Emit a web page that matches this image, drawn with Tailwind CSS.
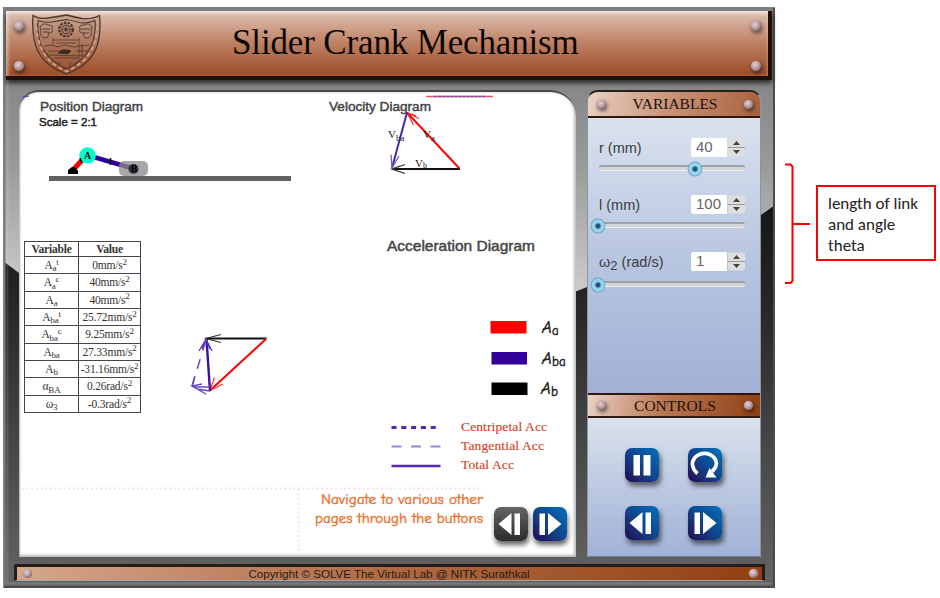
<!DOCTYPE html>
<html lang="en">
<head>
<meta charset="utf-8">
<title>Slider Crank Mechanism</title>
<script src="https://cdn.jsdelivr.net/npm/@tailwindcss/browser@4"></script>
</head>
<body class="w-[940px] h-[598px] overflow-hidden bg-white flex items-start font-['Liberation_Sans',sans-serif]">
<svg class="absolute w-0 h-0" aria-hidden="true">
  <defs>
    <radialGradient id="rivetFill" cx="40%" cy="35%" r="65%"><stop offset="0" stop-color="#e3d0d2"/><stop offset=".6" stop-color="#b99da0"/><stop offset="1" stop-color="#80686b"/></radialGradient>
    <radialGradient id="knobFill" cx="50%" cy="50%" r="50%"><stop offset="0" stop-color="#1d4a66"/><stop offset=".28" stop-color="#285a78"/><stop offset=".42" stop-color="#8cc8e4"/><stop offset=".75" stop-color="#a5d8ee"/><stop offset="1" stop-color="#5a9cbd"/></radialGradient>
    <symbol id="rivet" viewBox="0 0 12 12"><circle cx="6" cy="6" r="5.2" fill="url(#rivetFill)"/></symbol>
    <symbol id="knob" viewBox="0 0 16 16"><circle cx="8" cy="8" r="7.4" fill="url(#knobFill)"/></symbol>
    <symbol id="prev" viewBox="0 0 34 34"><path d="M4.500 17 17.500 6v22zM20.500 6.500h5.500v21.500h-5.500z" fill="#fff"/></symbol>
    <symbol id="next" viewBox="0 0 34 34"><path d="M6.500 6.500h5.500v21.500h-5.500zM15 6v22l13.500-11z" fill="#fff"/></symbol>
  </defs>
</svg>

<main class="relative ml-[3px] mt-[7px] w-[772px] h-[581px] shrink-0 flex flex-col">
  <svg class="absolute inset-0 -z-10" width="772" height="581" viewBox="3 7 772 581">
    <defs>
      <linearGradient id="metal" x1="0" y1="80" x2="0" y2="290" gradientUnits="userSpaceOnUse"><stop offset="0" stop-color="#868686"/><stop offset=".4" stop-color="#999"/><stop offset="1" stop-color="#cbcbcb"/></linearGradient>
      <linearGradient id="dark" x1="0" y1="210" x2="0" y2="580" gradientUnits="userSpaceOnUse"><stop offset="0" stop-color="#171717"/><stop offset=".25" stop-color="#262626"/><stop offset=".65" stop-color="#484848"/><stop offset="1" stop-color="#636363"/></linearGradient>
    </defs>
    <rect x="3" y="7" width="772" height="581" fill="url(#metal)"/>
    <path d="M3 261 19 273 300 340 577 291 587 287 761 215 775 205V588H3z" fill="url(#dark)"/>
    <path d="M4 588V8H774" fill="none" stroke="#7c7f7f" stroke-width="3"/>
    <path d="M774 8V587H4" fill="none" stroke="#4c4c4c" stroke-width="2"/>
    <path d="M7.500 80V584" stroke="#fff" stroke-opacity=".13" stroke-width="2"/>
    <path d="M7 583.500H771" stroke="#fff" stroke-opacity=".15" stroke-width="2"/>
  </svg>

  <header class="relative ml-[3px] mt-[4px] w-[766px] h-[69px] shrink-0 border-r-[4px] border-b-[4px] border-[#210e05] bg-linear-to-b from-[#dec2b3] via-[#bd8063] to-[#9b4a22] shadow-[0_3px_5px_rgba(0,0,0,.7),inset_0_3px_3px_rgba(255,255,255,.45),inset_3px_0_3px_rgba(255,255,255,.3)] flex items-stretch">
    <div class="w-[26px] pt-[9px] pb-[4px] pl-[7px] flex flex-col justify-between">
      <svg class="size-[12px] drop-shadow-[1px_2px_2px_rgba(0,0,0,.6)]"><use href="#rivet"/></svg>
      <svg class="size-[12px] drop-shadow-[1px_2px_2px_rgba(0,0,0,.6)]"><use href="#rivet"/></svg>
    </div>
    <svg class="w-[70px] h-[62px] mt-[3px]" viewBox="32 14 70 62" fill="none" stroke="#50382d">
      <path d="M33 15.500Q40 20 51 17.500Q59 16.500 66.500 15Q74 17 82 18.500Q92 19.500 99.500 15.500Q101 28 98.500 41Q96 52 88 61Q78 70 66.500 74Q54 70 45 61Q36 52 34 39Q32 27 33 15.500Z" stroke-width="1.300" fill="#6b4630" fill-opacity=".18"/>
      <path d="M38 20.500Q44 23 51 22Q59 21 66.500 19.500Q74 21 82 23Q90 23 95 20.500Q96 30 93 41Q90 50 83 58Q75 65 66.500 69Q58 65 50 58Q42 50 39.500 40Q37 30 38 20.500Z" stroke-width="1.100"/>
      <path d="M35.500 19Q37 48 50 61Q57 67 66.500 71.500Q77 67 85 59Q98 45 97.500 19" stroke="#d3a78f" stroke-width="1.800" stroke-dasharray="4 3"/>
      <circle cx="66" cy="29.500" r="6.800" stroke-width="2.400" stroke-dasharray="2.500 1.200"/><circle cx="66" cy="29.500" r="4.200"/><circle cx="66" cy="29.500" r="1.300"/><path d="M61 29.500h10M66 24.500v10M62.500 26l7 7M69.500 26l-7 7" stroke-width=".6"/>
      <path d="M40 27q3-5 8-2q6 0 4 4q2 4-4 4q2 5-4 5q-5-3-3-6zM92 27q-3-5-8-2q-6 0-4 4q-2 4 4 4q-2 5 4 5q5-3 3-6zM42 29h8M43 32h6M81 29h9M83 33h6" stroke-width=".9"/>
      <path d="M53 38v6M79 38v6M53 40h26M56 43h20M44 46q10-2 13 1l8-2 9 2 15-2M48 51h10M76 51h12M79 44v12M82 44v12M49 55l35 1M54 58h26M60 62v4M70 62v4" stroke-width=".8"/>
      <path d="M58 53q2-4 10-3l3 1-3 3z" fill="#382820"/>
    </svg>
    <h1 class="flex-1 pl-[130px] pt-[11px] font-['Liberation_Serif',serif] text-[35px] leading-[42px] text-[#0b0605] whitespace-nowrap tracking-[-0.15px]">Slider Crank Mechanism</h1>
    <div class="w-[18px] pt-[9px] pb-[4px] flex flex-col justify-between">
      <svg class="size-[12px] drop-shadow-[1px_2px_2px_rgba(0,0,0,.6)]"><use href="#rivet"/></svg>
      <svg class="size-[12px] drop-shadow-[1px_2px_2px_rgba(0,0,0,.6)]"><use href="#rivet"/></svg>
    </div>
  </header>

  <div class="mt-[10px] ml-[16px] flex h-[467px] shrink-0">
    <section class="relative w-[557px] h-[467px] bg-white rounded-tl-[20px] rounded-tr-[26px] border-t-2 border-[#4b4b4b] shadow-[inset_1px_0_2px_#aaa,inset_-2px_-2px_3px_#bbb]">
      <svg class="absolute left-0 top-[-1px]" width="557" height="466" viewBox="19 91 557 466" font-family="'Liberation Sans',sans-serif">
        <g fill="#444" stroke="#444" stroke-width=".45">
          <text x="40" y="111" font-size="13" textLength="103" lengthAdjust="spacingAndGlyphs">Position Diagram</text>
          <text x="39" y="125.500" font-size="11" fill="#222" stroke="#222" textLength="58" lengthAdjust="spacingAndGlyphs">Scale = 2:1</text>
          <text x="329" y="111" font-size="13" textLength="102" lengthAdjust="spacingAndGlyphs">Velocity Diagram</text>
          <text x="387" y="251" font-size="14.500" textLength="148" lengthAdjust="spacingAndGlyphs">Acceleration Diagram</text>
        </g>
        <path d="M23 97l6-1" stroke="#4a2fa8"/>
        <path d="M426 96.500h67" stroke="#f0505c" stroke-width="1.300"/><path d="M434 96.500h51" stroke="#7a4fb0" stroke-width="1.300" stroke-dasharray="3 1"/>

        <path d="M49 178.500h242" stroke="#626262" stroke-width="5"/>
        <path d="M73 170 84 158" stroke="#f00" stroke-width="5"/>
        <path d="M68 174v-4l4-3h3l3 4v3z" fill="#000"/>
        <path d="M92 156.500 133 168.500" stroke="#310099" stroke-width="4.500"/>
        <circle cx="87.500" cy="155.500" r="8.300" fill="#0fc"/>
        <path d="M80 158l2 5M110.500 158v7" stroke="#111" stroke-width="1.600"/>
        <rect x="119" y="161" width="29" height="15" rx="5" fill="#8b8b8b" fill-opacity=".76"/>
        <circle cx="133.500" cy="169" r="5" fill="#1c2430" fill-opacity=".85"/>
        <g font-family="'Liberation Serif',serif" font-weight="bold" font-size="10" text-anchor="middle"><text x="87.500" y="159">A</text><text x="134" y="172">B</text></g>

        <g fill="none" stroke-width="1.700">
          <path d="M460 169H392" stroke="#111" stroke-width="2"/><path d="M405 164.500 392 169l13 4.500M400 166l-8 3 8 3" stroke="#333" stroke-width="1.200"/>
          <path d="M459.500 168.500 407 112.500" stroke="#f00" stroke-width="2"/><path d="M419 118.500 407 112.500l6.500 12.500M416 116l-9-3.500" stroke="#f22" stroke-width="1.200"/>
          <path d="M407 112.500 392 168" stroke="#4426b0" stroke-width="2"/><path d="M391 154.500 392 168l7-12" stroke="#775bc8" stroke-width="1.300"/>
        </g>
        <g font-family="'Liberation Serif',serif" font-size="11" fill="#222">
          <text x="388" y="138">V<tspan font-size="9" dy="3">ba</tspan></text>
          <text x="423" y="138">V<tspan font-size="9" dy="3">a</tspan></text>
          <text x="415" y="167">V<tspan font-size="8" dy="1">b</tspan></text>
        </g>

        <g fill="none">
          <path d="M266.500 338.500H206" stroke="#111" stroke-width="2"/><path d="M221 334.500 206 338.500l15 4" stroke="#333" stroke-width="1.200"/>
          <path d="M266 339 210 390.500" stroke="#f00" stroke-width="2"/><path d="M223 384l-13 6.500 4.500-13" stroke="#f33" stroke-width="1.200"/>
          <path d="M210 391 206.500 339" stroke="#3b10a4" stroke-width="2.400"/>
          <path d="M199 351 206 339l6 12M202 349l4-10 4 10" stroke="#5836ba" stroke-width="1.300"/>
          <path d="M206 340 192 386" stroke="#6847bf" stroke-width="1.500" stroke-dasharray="10 9" stroke-dashoffset="-1"/>
          <path d="M210 387H193M206 394l-14-8 10-2M192 387l3-11M210 391l-13-2" stroke="#6847bf" stroke-width="1.300"/>
        </g>

        <path d="M490.500 321h36v12.500h-36z" fill="#f00"/><path d="M491.500 352h35.500v12.500h-35.500z" fill="#309"/><path d="M491.500 382.500h36v12.500h-36z"/>
        <g font-family="'Comic Sans MS','Comic Neue',Lato,sans-serif" fill="#151515" stroke="#151515" stroke-width=".4">
          <text x="542" y="333"><tspan font-style="italic" font-size="17">A</tspan><tspan font-size="13" dy="2">a</tspan></text>
          <text x="542" y="363.500"><tspan font-style="italic" font-size="17">A</tspan><tspan font-size="13" dy="2">ba</tspan></text>
          <text x="541" y="394"><tspan font-style="italic" font-size="17">A</tspan><tspan font-size="13" dy="2">b</tspan></text>
        </g>
        <path d="M391.500 427.500h46" stroke="#5326b3" stroke-width="3" stroke-dasharray="5 4.800"/>
        <path d="M391.500 446.500h50" stroke="#9a83d2" stroke-width="2" stroke-dasharray="10 9.500"/>
        <path d="M391.500 466h49" stroke="#5326b3" stroke-width="2.700"/>
        <g font-family="'Liberation Serif',serif" font-size="13.500" fill="#d4421b" stroke="#d4421b" stroke-width=".15">
          <text x="461" y="430.500" textLength="86">Centripetal Acc</text>
          <text x="461" y="449.500" textLength="83">Tangential Acc</text>
          <text x="461" y="469" textLength="53">Total Acc</text>
        </g>
        <path d="M22 488.500H483M298.500 489V552" fill="none" stroke="#f2e1e5" stroke-width="2" stroke-dasharray="2 2.600"/>
        <g font-family="'Comic Sans MS','Comic Neue',Lato,sans-serif" font-size="14" fill="#e8722f" stroke="#e8722f" stroke-width=".4">
          <text x="321" y="503.500" textLength="162" lengthAdjust="spacingAndGlyphs">Navigate to various other</text>
          <text x="315" y="522.500" textLength="168" lengthAdjust="spacingAndGlyphs">pages through the buttons</text>
        </g>
      </svg>

      <div class="h-full flex justify-between">
        <table class="self-start ml-[5px] mt-[149px] w-[116px] h-[172px] table-fixed border-collapse font-['Liberation_Serif',serif] text-[11.500px] leading-[12px] tracking-[-0.2px] text-center text-[#333] [&_td]:border [&_td]:border-[#454550] [&_th]:border [&_th]:border-[#454550] [&_td]:p-0 [&_th]:p-0 [&_td]:whitespace-nowrap [&_sub]:text-[9px] [&_sup]:text-[9px]">
          <colgroup><col class="w-[54px]"><col class="w-[62px]"></colgroup>
          <tr class="h-[15px]"><th>Variable</th><th>Value</th></tr>
          <tr><td>A<sub>a</sub><sup>t</sup></td><td>0mm/s<sup>2</sup></td></tr>
          <tr><td>A<sub>a</sub><sup>c</sup></td><td>40mm/s<sup>2</sup></td></tr>
          <tr><td>A<sub>a</sub></td><td>40mm/s<sup>2</sup></td></tr>
          <tr><td>A<sub>ba</sub><sup>t</sup></td><td>25.72mm/s<sup>2</sup></td></tr>
          <tr><td>A<sub>ba</sub><sup>c</sup></td><td>9.25mm/s<sup>2</sup></td></tr>
          <tr><td>A<sub>ba</sub></td><td>27.33mm/s<sup>2</sup></td></tr>
          <tr><td>A<sub>b</sub></td><td>-31.16mm/s<sup>2</sup></td></tr>
          <tr><td>α<sub>BA</sub></td><td>0.26rad/s<sup>2</sup></td></tr>
          <tr><td>ω<sub>3</sub></td><td>-0.3rad/s<sup>2</sup></td></tr>
        </table>
        <div class="self-end flex gap-[5px] mr-[9px] mb-[16px]">
          <button class="size-[34px] rounded-[7px] bg-linear-to-b from-[#666] to-[#2b2b2b] shadow-[1px_4px_5px_rgba(0,0,0,.6)]" aria-label="Previous page"><svg class="size-[34px]"><use href="#prev"/></svg></button>
          <button class="size-[34px] rounded-[7px] bg-linear-to-bl from-[#0670bd] via-[#0b478f] to-[#1c0750] shadow-[1px_4px_5px_rgba(0,0,0,.6)]" aria-label="Next page"><svg class="size-[34px]"><use href="#next"/></svg></button>
        </div>
      </div>
    </section>

    <aside class="ml-[11px] w-[174px] h-[467px] rounded-t-[11px] overflow-hidden flex flex-col border-l border-r border-[#8e94a4] border-t-2 border-t-[#29201c]">
      <h2 class="h-[26px] shrink-0 flex items-center justify-between pl-[8px] pr-[6px] bg-[linear-gradient(100deg,#ead2c4,#c9957a_45%,#a7623f)] border-b-2 border-[#32180c] font-['Liberation_Serif',serif] text-[15.500px] text-[#211009]">
        <svg class="size-[11px] drop-shadow-[1px_2px_2px_rgba(0,0,0,.6)]"><use href="#rivet"/></svg>
        <span>VARIABLES</span>
        <svg class="size-[11px] drop-shadow-[1px_2px_2px_rgba(0,0,0,.6)]"><use href="#rivet"/></svg>
      </h2>
      <div class="h-[275px] shrink-0 bg-linear-to-b from-[#d9e2ee] via-[#b9c6e1] to-[#a2b0d6] pl-[11px] pr-[15px] pt-[19px] flex flex-col gap-[19px] text-[14.500px] text-[#3d3d40]">
        <div class="h-[38px]">
          <div class="flex h-[20px] justify-between items-center"><span class="pt-[4px]">r (mm)</span><span class="flex h-[19px] w-[54px] gap-px"><b class="w-[36px] bg-white rounded-l-[2px] pl-[5px] font-normal text-[15px] leading-[18px] text-[#666]">40</b><svg class="w-[17px] h-[19px]" viewBox="0 0 17 19"><rect y=".5" width="17" height="18" rx="2" fill="#dedede"/><path d="M0 9.500h17" stroke="#999"/><path d="M5 7h7L8.500 3zM5 12h7l-3.500 4z" fill="#444"/></svg></span></div>
          <div class="relative mt-[8px] h-[6px] rounded-full bg-[#d3d5d8] border-t-2 border-[#9da0a6] border-b border-b-[#eee]"><svg class="absolute left-[88px] top-[-6px] size-[16px]"><use href="#knob"/></svg></div>
        </div>
        <div class="h-[38px]">
          <div class="flex h-[20px] justify-between items-center"><span class="pt-[4px]">l (mm)</span><span class="flex h-[19px] w-[54px] gap-px"><b class="w-[36px] bg-white rounded-l-[2px] pl-[5px] font-normal text-[15px] leading-[18px] text-[#666]">100</b><svg class="w-[17px] h-[19px]" viewBox="0 0 17 19"><rect y=".5" width="17" height="18" rx="2" fill="#dedede"/><path d="M0 9.500h17" stroke="#999"/><path d="M5 7h7L8.500 3zM5 12h7l-3.500 4z" fill="#444"/></svg></span></div>
          <div class="relative mt-[8px] h-[6px] rounded-full bg-[#d3d5d8] border-t-2 border-[#9da0a6] border-b border-b-[#eee]"><svg class="absolute left-[-9px] top-[-6px] size-[16px]"><use href="#knob"/></svg></div>
        </div>
        <div class="h-[38px]">
          <div class="flex h-[20px] justify-between items-center"><span class="whitespace-nowrap pt-[4px]">ω<sub class="text-[13px]">2</sub> (rad/s)</span><span class="flex h-[19px] w-[54px] gap-px"><b class="w-[36px] bg-white rounded-l-[2px] pl-[5px] font-normal text-[15px] leading-[18px] text-[#666]">1</b><svg class="w-[17px] h-[19px]" viewBox="0 0 17 19"><rect y=".5" width="17" height="18" rx="2" fill="#dedede"/><path d="M0 9.500h17" stroke="#999"/><path d="M5 7h7L8.500 3zM5 12h7l-3.500 4z" fill="#444"/></svg></span></div>
          <div class="relative mt-[10px] h-[6px] rounded-full bg-[#d3d5d8] border-t-2 border-[#9da0a6] border-b border-b-[#eee]"><svg class="absolute left-[-9px] top-[-6px] size-[16px]"><use href="#knob"/></svg></div>
        </div>
      </div>
      <h2 class="h-[25px] shrink-0 flex items-center justify-between pl-[8px] pr-[6px] bg-[linear-gradient(100deg,#ead2c4,#b87650_45%,#8f4014)] border-y-2 border-[#32180c] font-['Liberation_Serif',serif] text-[15.500px] text-[#211009]">
        <svg class="size-[11px] drop-shadow-[1px_2px_2px_rgba(0,0,0,.6)]"><use href="#rivet"/></svg>
        <span>CONTROLS</span>
        <svg class="size-[11px] drop-shadow-[1px_2px_2px_rgba(0,0,0,.6)]"><use href="#rivet"/></svg>
      </h2>
      <div class="flex-1 bg-linear-to-b from-[#d9e2ec] to-[#a2b1d7] border-b border-[#777f96] pl-[37px] pt-[30px] grid grid-cols-[34px_34px] gap-x-[29px] auto-rows-[34px] gap-y-[24px]">
        <button class="size-[34px] rounded-[7px] bg-linear-to-bl from-[#0670bd] via-[#0b478f] to-[#1c0750] shadow-[2px_4px_5px_rgba(0,0,0,.55)]" aria-label="Pause"><svg class="size-[34px]" viewBox="0 0 34 34"><path d="M8.500 7h6.500v20.500h-6.500zM18.500 7h7v20.500h-7z" fill="#fff"/></svg></button>
        <button class="size-[34px] rounded-[7px] bg-linear-to-bl from-[#0670bd] via-[#0b478f] to-[#1c0750] shadow-[2px_4px_5px_rgba(0,0,0,.55)]" aria-label="Restart"><svg class="size-[34px]" viewBox="0 0 34 34"><path d="M9.500 25.500C3.500 20.500 3 14 7 9.500C12 4 21 4 26 9.500C30 14 28.500 20 24 23.500" fill="none" stroke="#fff" stroke-width="3.600"/><path d="M17.500 29.500 21.500 20l7 9.500z" fill="#fff"/></svg></button>
        <button class="size-[34px] rounded-[7px] bg-linear-to-bl from-[#0670bd] via-[#0b478f] to-[#1c0750] shadow-[2px_4px_5px_rgba(0,0,0,.55)]" aria-label="Step back"><svg class="size-[34px]"><use href="#prev"/></svg></button>
        <button class="size-[34px] rounded-[7px] bg-linear-to-bl from-[#0670bd] via-[#0b478f] to-[#1c0750] shadow-[2px_4px_5px_rgba(0,0,0,.55)]" aria-label="Step forward"><svg class="size-[34px]"><use href="#next"/></svg></button>
      </div>
    </aside>
  </div>

  <footer class="ml-[11px] mt-[7px] w-[751px] h-[17px] shrink-0 rounded-tl-[3px] border-t-[3px] border-l-[3px] border-r-[3px] border-b border-[#251d19] border-b-[#a7a29f] bg-linear-to-r from-[#d5a78d] via-[#b06a43] to-[#92400f] flex items-center justify-between pl-[5px] pr-[3px] text-[11.620px] leading-[12px] text-[#2b190f]">
    <svg class="size-[11px]"><use href="#rivet"/></svg>
    <span class="-ml-[3px] whitespace-nowrap">Copyright © SOLVE The Virtual Lab @ NITK Surathkal</span>
    <svg class="size-[11px]"><use href="#rivet"/></svg>
  </footer>
</main>

<aside class="ml-[10px] mt-[163px] flex items-start">
  <svg width="26" height="122" viewBox="785 163 26 122" fill="none" stroke="#f00" stroke-width="2"><path d="M785 164.500h5.500l2 2V281l-2 2H785M792 224h18"/></svg>
  <p class="ml-[5px] mt-[22px] w-[120px] h-[76px] border-2 border-[#fb0007] pl-[10px] pt-[6px] font-[Carlito,'Open_Sans',sans-serif] text-[17px] leading-[21px] text-[#222] whitespace-nowrap">length of link<br>and angle<br>theta</p>
</aside>
</body>
</html>
